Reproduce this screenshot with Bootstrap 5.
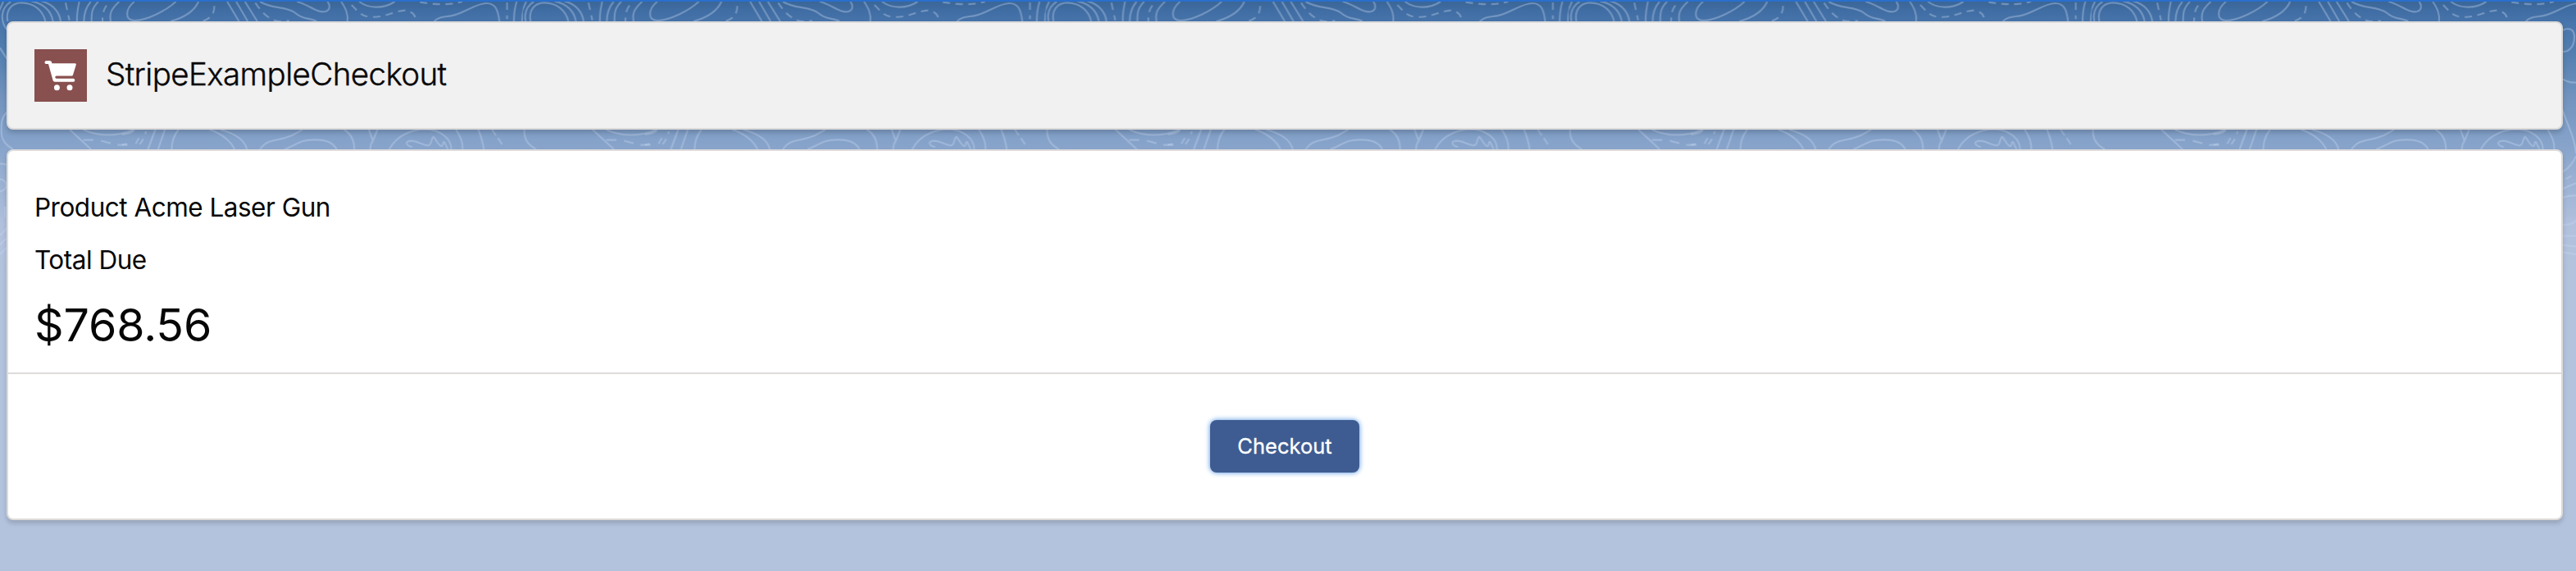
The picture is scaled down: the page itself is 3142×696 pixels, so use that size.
<!DOCTYPE html>
<html lang="en">
<head>
<meta charset="utf-8">
<title>StripeExampleCheckout</title>
<link href="https://cdn.jsdelivr.net/npm/bootstrap@5.3.0/dist/css/bootstrap.min.css" rel="stylesheet">
<style>
  body { font-family: Inter, "Liberation Sans", sans-serif; color: #080707; background: #b3c3dd; min-height: 696px; overflow: hidden; }
  .stage { min-height: 696px; padding: 24px 16px 0 8px; border-top: 2px solid #2a6fcc; position: relative; isolation: isolate; }
  .contours { position: absolute; inset: 0; z-index: -1; width: 100%; height: 330px; }
  .contours .ln { fill: none; stroke: #c9daf2; stroke-opacity: .36; stroke-width: 6.5; }
  .contours .ds { stroke-dasharray: 27 20; }
  .panel { border: 2px solid #dddbda; border-radius: 8px; box-shadow: 0 4px 4px rgba(0,0,0,.1), 0 4px 8px rgba(0,0,0,.06); background: #fff; }
  .page-head { height: 132px; padding: 0 32px; background: #f1f1f1; margin-bottom: 24px; gap: 23px; }
  .cart { width: 64px; height: 64px; background: #88504f; }
  .page-title { font-size: 38.5px; font-weight: 300; line-height: 50px; letter-spacing: -.6px; margin: 0 0 5px; -webkit-text-stroke: .4px #080707; }
  .checkout { height: 452px; }
  .summary { height: 272px; padding: 37px 32px 0; border-bottom: 2px solid #dddbda; }
  .line { font-size: 31.5px; line-height: 64px; margin: 0; letter-spacing: -.5px; }
  .total { font-size: 55.5px; line-height: 84px; margin: 5px 0 0; letter-spacing: -.1px; }
  .pay { width: 182px; height: 64px; padding: 0; border: 0; border-radius: 8px; background: #3e5c91; color: #fff; font-size: 25.5px; -webkit-text-stroke: .3px #fff; box-shadow: 0 0 6px #4a90e2; margin-right: 0; }
</style>
</head>
<body>
<main class="stage">
  <svg class="contours" aria-hidden="true">
    <defs>
      <linearGradient id="sky" x1="0" y1="0" x2="0" y2="1">
        <stop offset="0" stop-color="#3a6697"/><stop offset=".03" stop-color="#3f6ca2"/><stop offset=".08" stop-color="#4875ab"/>
        <stop offset=".2" stop-color="#5480b0"/><stop offset=".35" stop-color="#7193be"/><stop offset=".54" stop-color="#88a4cb"/>
        <stop offset=".68" stop-color="#9db3d4"/><stop offset=".82" stop-color="#b1c0dd"/><stop offset="1" stop-color="#b3c3dd"/>
      </linearGradient>
      <pattern id="topo" width="637.8" height="330" patternUnits="userSpaceOnUse" y="-2">
        <g transform="scale(.33333)">
          <path class="ln" d="M28 78C20 35 45 10 78 10C125 10 158 40 166 78M40 6C0 30 0 80 28 112M-3 40L12 6M0 175L25 215M115 4C165 15 188 45 194 78M152 4C195 15 218 45 222 78M290 6C285 30 280 50 282 78M332 6C312 30 307 50 307 78M360 6C335 30 335 50 335 78M436 6C405 35 400 50 405 78"/>
          <path class="ln ds" d="M240 10L254 74M390 20C375 40 375 60 375 78"/>
          <path class="ln" d="M25 410C5 430 5 450 5 480C5 520 30 535 48 546M255 474L333 546M305 474C360 500 430 500 488 474M305 512H342M370 515L405 524M430 530H467M0 598L25 602M0 655C30 660 30 695 0 700M18 755V795M0 860L25 835M0 895L25 870M0 930L25 905"/>
        </g>
        <g transform="translate(148.8 0) scale(.33333)">
          <path class="ln" d="M45 6C10 35 10 75 45 75C90 75 160 40 197 6M280 6C265 40 225 65 178 78M385 6L428 78M418 6L460 78M450 6L495 78M505 6C550 35 600 20 635 48C660 72 690 65 712 78M640 6C680 15 715 50 745 42C765 35 760 15 752 6M802 6C818 30 828 50 825 78M868 6C900 30 955 35 998 6M1142 78C1160 60 1180 62 1204 58C1250 50 1294 12 1334 12C1369 12 1376 40 1381 78M1278 110C1300 100 1322 105 1320 140C1318 180 1290 192 1278 188M1278 290C1300 302 1310 302 1326 302"/>
          <path class="ln ds" d="M338 22C338 55 320 70 295 77M488 10C510 45 540 75 575 78L612 76M840 18C870 50 880 62 915 62C960 65 1000 38 1040 38C1070 45 1073 60 1075 74M1090 8C1140 15 1190 22 1245 6M1409 9V70"/>
          <path class="ln" d="M1444 6Q1434 40 1434 78M1479 6Q1464 40 1464 78M0 492C20 490 35 485 45 476M0 530L18 526M50 526L62 505M65 528L78 508M85 490L88 480M122 474L95 546M157 474L132 546M207 474C190 495 182 520 182 546M320 474C370 490 400 520 412 546M360 474C420 490 450 515 457 546M505 546C530 510 560 515 595 505C630 495 650 480 660 474M595 546C640 530 650 510 705 511C750 510 775 525 785 546M812 474C840 490 850 520 850 546M903 474L918 515L935 474M918 515C908 525 910 540 908 546M978 546C1010 485 1080 472 1110 472C1170 475 1205 510 1205 546M1062 538C1035 530 1035 515 1060 515C1090 518 1095 530 1120 532C1135 530 1130 505 1140 500C1150 510 1155 530 1170 535C1180 530 1170 515 1180 520L1192 545M1222 474C1240 500 1248 520 1246 546M1268 380C1300 470 1320 500 1326 560M1278 628C1300 615 1320 590 1326 570M1354 474L1368 495M1376 505L1391 528M1288 655L1310 643M1278 690L1326 670M1278 722C1300 715 1310 715 1326 715M1278 822C1300 825 1320 815 1326 805M1278 863H1326M1278 895L1326 902M1278 922L1326 930"/>
        </g>
      </pattern>
    </defs>
    <rect width="100%" height="330" fill="url(#sky)"/>
    <rect width="100%" height="330" fill="url(#topo)"/>
  </svg>

  <header class="panel page-head d-flex align-items-center">
    <svg class="cart flex-shrink-0" viewBox="0 0 64 64" aria-hidden="true">
      <g fill="#fff">
        <path d="M14.500 14h4c1.300 0 2.200.8 2.600 2l.3 1.300h28.200c1 0 1.500.8 1.200 1.700l-3.700 12c-.3 1-1.100 1.500-2.100 1.500H27c-2.200 0-2.200 3.200 0 3.200h20.500c2.400 0 2.400 4 0 4H25c-1.300 0-2.200-.8-2.500-2L17 18h-2.500c-2.600 0-2.600-4 0-4z"/>
        <circle cx="27.400" cy="46.700" r="3.500"/><circle cx="43" cy="46.700" r="3.500"/>
      </g>
    </svg>
    <h1 class="page-title">StripeExampleCheckout</h1>
  </header>

  <section class="panel checkout d-flex flex-column">
    <div class="summary">
      <p class="line">Product Acme Laser Gun</p>
      <p class="line">Total Due</p>
      <p class="total">$768.56</p>
    </div>
    <div class="flex-grow-1 d-flex align-items-center justify-content-center">
      <button class="btn pay" type="button">Checkout</button>
    </div>
  </section>
</main>
<script src="https://cdn.jsdelivr.net/npm/bootstrap@5.3.0/dist/js/bootstrap.bundle.min.js"></script>
</body>
</html>
